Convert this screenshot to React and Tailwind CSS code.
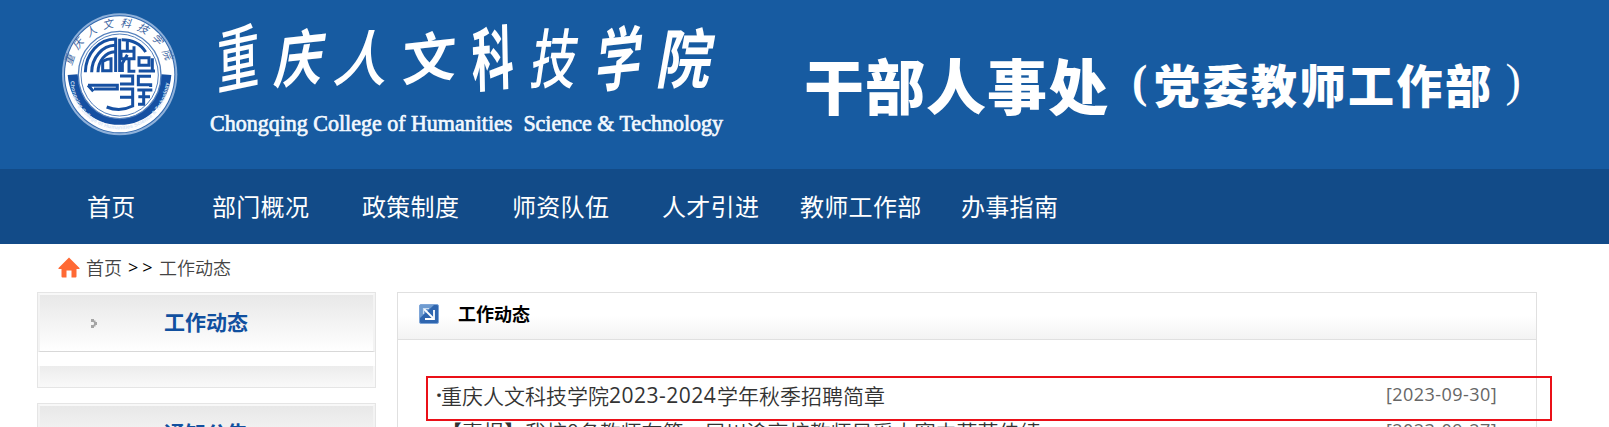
import React from "react";

const SANS = "font-['Noto_Sans_CJK_SC','Open_Sans',sans-serif]";

function Seal() {
  return (
    <svg className="h-[150px] w-[160px] shrink-0" viewBox="0 0 480 450" fill="none">
      <defs>
        <path id="sealTop" d="M92 232 A147 152 0 0 1 386 232" />
        <path id="sealBottom" d="M91 234 A148 154 0 0 0 387 234" />
      </defs>
      <ellipse cx="239" cy="223" rx="173" ry="183" fill="#8fb1da" />
      <ellipse cx="239" cy="223" rx="167" ry="177" fill="#2f66ac" />
      <ellipse cx="239" cy="223" rx="164" ry="174" fill="#fff" />
      <path d="M98 224 A141 148 0 0 0 379 224" stroke="#1650a2" strokeWidth="30" />
      <ellipse cx="239" cy="225" rx="124" ry="131" fill="#fff" stroke="#5581bd" strokeWidth="4" />
      <ellipse cx="239" cy="225" rx="116" ry="123" stroke="#5581bd" strokeWidth="3" />
      <text fontSize="32" fontStyle="italic" fill="#3c65a2" fontFamily="Noto Sans CJK SC" textLength="385">
        <textPath href="#sealTop" startOffset="34">重庆人文科技学院</textPath>
      </text>
      <text fontSize="16" fontWeight="700" fill="#d5e4f6" fontFamily="Liberation Sans" textLength="450" lengthAdjust="spacing">
        <textPath href="#sealBottom" startOffset="10">Chongqing College of Humanities Science &amp; Technology</textPath>
      </text>
      <g stroke="#1650a2" strokeWidth="9">
        <path d="M136 217 A90 102 0 0 1 227 117 V216" />
        <path d="M155 217 A72 82 0 0 1 225 136" />
        <path d="M174 217 A52 62 0 0 1 225 155" />
        <path d="M188 212 V184 Q202 176 213 176 V212 Z" />
        <path d="M239 116 V216 M245 119 Q294 119 317 156 M262 117 V154 M243 154 H283 M243 154 V176 H282 V139 M262 164 L247 190 V216 M267 176 V214 H286" />
        <path d="M297 173 H327 V196 H297 Z M337 175 V216 M296 213 H345" />
        <path d="M144 256 H232 V267 H162 M144 256 L160 274" />
        <path d="M240 228 H278 V252 H240 M240 267 H278 V292 H240 M278 292 V318 Q240 337 200 321" />
        <path d="M333 229 H295 V254 H333 M292 270 H337 M295 290 H330 M311 270 V313 H294 M332 250 V261" />
      </g>
    </svg>
  );
}

const callig = [
  ["重", "w-[62px] font-medium -skew-x-[18deg] -rotate-12 scale-x-[0.8] scale-y-[1.28]"],
  ["庆", "w-[64px] font-bold -skew-x-[18deg] -rotate-6 scale-x-[0.9] scale-y-[1.12]"],
  ["人", "w-[65px] font-medium -skew-x-[16deg] scale-y-[1.12]"],
  ["文", "w-[63px] font-bold -skew-x-[8deg] -rotate-6"],
  ["科", "w-[63px] font-bold -skew-x-[8deg] -rotate-6 scale-x-[0.78] scale-y-[1.28]"],
  ["技", "w-[63px] font-medium -skew-x-[12deg] scale-x-[0.85] scale-y-[1.2]"],
  ["学", "w-[66px] font-bold -skew-x-[18deg] -rotate-6 scale-x-[0.85] scale-y-[1.26]"],
  ["院", "w-[68px] font-bold -skew-x-[12deg] scale-y-[1.2]"],
];

const nav = [
  ["首页", "w-[125px]"],
  ["部门概况", "w-[150px]"],
  ["政策制度", "w-[150px]"],
  ["师资队伍", "w-[150px]"],
  ["人才引进", "w-[138px]"],
  ["教师工作部", "w-[161px]"],
  ["办事指南", "w-[110px]"],
];

function Header() {
  return (
    <header className="flex h-[169px] items-start bg-[#175ba1] pl-[40px] text-white">
      <Seal />
      <div className="flex w-[580px] shrink-0 flex-col pt-[16px]">
        <div className="flex h-[78px] items-center pl-[7px]">
          {callig.map(([c, cls]) => (
            <span key={c} className={"shrink-0 text-center text-[54px] leading-[78px] " + cls}>{c}</span>
          ))}
        </div>
        <svg className="mt-[10px] ml-[9px] h-[46px] w-[530px]" viewBox="0 0 530 46">
          <text x="1" y="27" fontFamily="Liberation Serif" fontSize="23" fill="#f2f8ff" stroke="#f2f8ff" strokeWidth="0.7" textLength="513" lengthAdjust="spacingAndGlyphs">
            {"Chongqing College of Humanities\u00a0 Science & Technology"}
          </text>
        </svg>
      </div>
      <h1 className="ml-[24px] shrink-0 pt-[49px] text-[60px] leading-[70px] font-black tracking-[1px] whitespace-nowrap">干部人事处</h1>
      <div className="flex shrink-0 pt-[51px] leading-[64px] font-black whitespace-nowrap">
        <span className="ml-[23px] w-[22px] font-['Liberation_Serif',serif] text-[46px] leading-[61px] font-bold">(</span>
        <span className="text-[46px] tracking-[2.5px]">党委教师工作部</span>
        <span className="ml-[12px] font-['Liberation_Serif',serif] text-[46px] leading-[60px] font-medium">)</span>
      </div>
    </header>
  );
}

function SideBox({ title, arrow }) {
  return (
    <section className="h-[96px] shrink-0 border border-[#e5e5e5] bg-white">
      <div className="flex h-[59px] items-center border-x-2 border-t-2 border-b border-x-[#f3f3f3] border-t-[#f8f8f8] border-b-[#d8d8d8] bg-linear-to-b from-[#e8e8e8] to-white">
        <div className="flex w-[124px] shrink-0 pl-[50px]">
          {arrow && (
            <svg width="8" height="11" viewBox="0 0 8 11" fill="#a5a5a5">
              <path d="M1 1h3v3H1zM3.500 2.500h2v2h-2zM4 4h3v3H4zM3.500 6.500h2v2h-2zM1 7h3v3H1z" />
            </svg>
          )}
        </div>
        <h2 className="-mt-[4px] text-[21px] leading-[30px] font-bold text-[#11509f]">{title}</h2>
      </div>
      <div className="mt-[14px] h-[21px] border-x-2 border-[#f8f8f8] bg-linear-to-b from-[#ececec] to-[#f9f9f9]" />
    </section>
  );
}

function Row({ children, date }) {
  return (
    <li className="flex h-[36px] items-center justify-between pr-[39px] pl-[38px] whitespace-nowrap text-[#333]">
      <span className="flex text-[21px] leading-[36px] font-[350]">{children}</span>
      <span className="w-[111px] font-['Open_Sans',sans-serif] text-[18px] leading-[32px] tracking-[0.45px] text-[#666] -mt-[2px]">{date}</span>
    </li>
  );
}

export default function App() {
  return (
    <div className={"relative h-[427px] w-full overflow-hidden bg-white " + SANS}>
      <Header />
      <nav className="flex h-[75px] items-center bg-[#124b88] pb-[2px] pl-[87px] text-[24px] tracking-[0.3px] text-white">
        {nav.map(([t, w]) => (
          <a key={t} className={"shrink-0 whitespace-nowrap " + w}>{t}</a>
        ))}
      </nav>
      <div className="flex h-[48px] items-center pb-[1px] pl-[58px] text-[18px] text-[#444]">
        <svg width="22" height="21" viewBox="0 0 22 21" fill="#ff6934">
          <path d="M11 0.500 21.500 11v1h-3v7.500q0 1-1 1h-4v-7h-5v7h-4q-1 0-1-1V12h-3v-1z" />
        </svg>
        <span className="-mt-[1px] ml-[6px] font-[350]">首页</span>
        <span className="ml-[6px] w-[31px] font-['Open_Sans',sans-serif] text-[18px] tracking-[4px] text-black">&gt;&gt;</span>
        <span className="-mt-[1px] font-[350]">工作动态</span>
      </div>
      <main className="flex h-[135px] items-start pl-[37px]">
        <aside className="flex w-[339px] shrink-0 flex-col gap-[15px]">
          <SideBox title="工作动态" arrow />
          <SideBox title="通知公告" />
        </aside>
        <section className="ml-[21px] h-[300px] w-[1140px] shrink-0 border border-[#e0e0e0]">
          <div className="flex h-[47px] items-center border-b border-[#e0e0e0] bg-linear-to-b from-white from-50% to-[#f3f3f3] pl-[21px]">
            <svg className="-mt-[5px]" width="20" height="20" viewBox="0 0 20 20" fill="none">
              <rect x="0.5" y="0.5" width="19" height="19" rx="1.500" fill="#2f66af" stroke="#7fa6d8" />
              <path d="M1 1h14L1 14z" fill="#6e9bd0" />
              <path d="M5 5 14 14" stroke="#fff" strokeWidth="1.800" />
              <path d="M15 6v9H6" stroke="#fff" strokeWidth="1.800" />
              <path d="M4.500 10V4.500H10" stroke="#c9dcf1" strokeWidth="1.200" />
            </svg>
            <h2 className="-mt-[5px] ml-[19px] text-[18px] font-bold text-black">工作动态</h2>
          </div>
          <ul className="pt-[37px]">
            <Row date="[2023-09-30]">
              <span className="w-[5px] font-['Open_Sans',sans-serif] font-bold">·</span>
              <span>重庆人文科技学院</span>
              <span className="w-[108px] font-['Open_Sans',sans-serif] font-normal tracking-[0.5px]">2023-2024</span>
              <span>学年秋季招聘简章</span>
            </Row>
            <Row date="[2023-09-27]">
              <span className="w-[5px] font-['Open_Sans',sans-serif] font-bold">·</span>
              <span>【喜报】我校8名教师在第一届川渝高校教师风采大赛中荣获佳绩</span>
            </Row>
          </ul>
        </section>
      </main>
      <div className="absolute top-[376px] left-[426px] h-[45px] w-[1126px] border-2 border-[#ea1018]" />
    </div>
  );
}
